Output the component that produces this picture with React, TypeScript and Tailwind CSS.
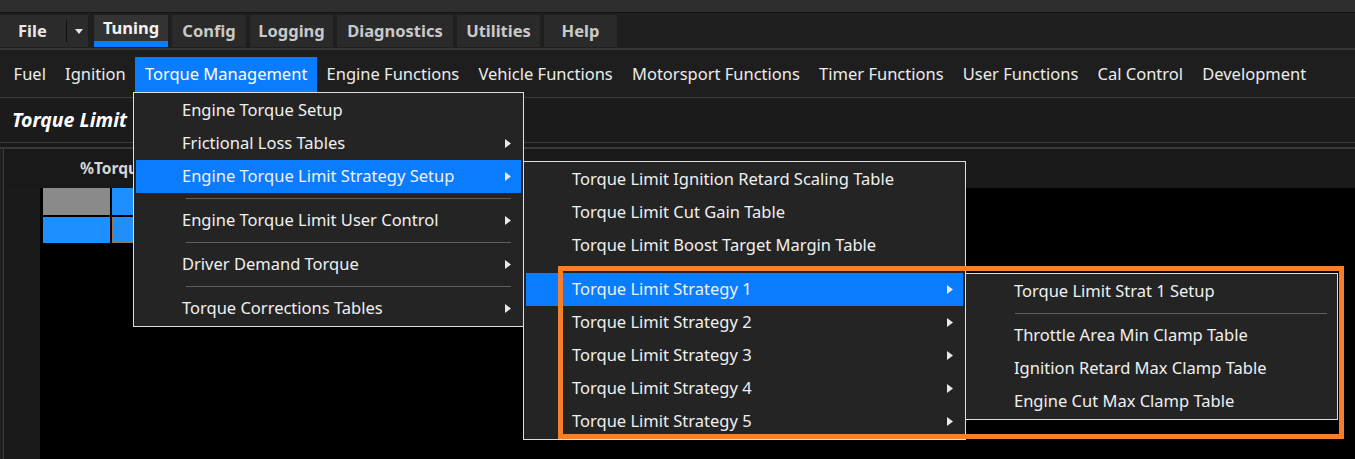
import React from 'react'

type Entry = { label?: string; sub?: boolean; active?: boolean; sep?: boolean }

const Arrow = () => (
  <svg width="6" height="9" viewBox="0 0 6 9" className="shrink-0">
    <path d="M0 0L6 4.5L0 9Z" fill="#e8e8e8" />
  </svg>
)

const Menu = ({ items, className, sepClass }: { items: Entry[]; className: string; sepClass: string }) => (
  <div className={`absolute bg-[#242424] border border-[#dedede] py-[1px] px-[2px] text-[16.5px] text-[#f0f0f0] ${className}`}>
    {items.map((it, i) =>
      it.sep ? (
        <div key={i} className={`h-[11px] flex items-center ${sepClass}`}>
          <div className="h-px w-full bg-[#5e5e5e]" />
        </div>
      ) : (
        <div key={i} className={`flex items-center h-[33px] pl-[46px] pr-[10px] ${it.active ? 'bg-[#0a7cff]' : ''}`}>
          <span className="flex-1 whitespace-nowrap">{it.label}</span>
          {it.sub && <Arrow />}
        </div>
      )
    )}
  </div>
)

export default function App() {
  const tabs = [
    { name: 'Tuning', w: 'w-[74px]', active: true },
    { name: 'Config', w: 'w-[74px]' },
    { name: 'Logging', w: 'w-[83px]' },
    { name: 'Diagnostics', w: 'w-[116px]' },
    { name: 'Utilities', w: 'w-[83px]' },
    { name: 'Help', w: 'w-[73px]' },
  ]
  const menuBar = ['Fuel', 'Ignition', 'Torque Management', 'Engine Functions', 'Vehicle Functions', 'Motorsport Functions', 'Timer Functions', 'User Functions', 'Cal Control', 'Development']

  const torqueMenu: Entry[] = [
    { label: 'Engine Torque Setup' },
    { label: 'Frictional Loss Tables', sub: true },
    { label: 'Engine Torque Limit Strategy Setup', sub: true, active: true },
    { sep: true },
    { label: 'Engine Torque Limit User Control', sub: true },
    { sep: true },
    { label: 'Driver Demand Torque', sub: true },
    { sep: true },
    { label: 'Torque Corrections Tables', sub: true },
  ]
  const strategyMenu: Entry[] = [
    { label: 'Torque Limit Ignition Retard Scaling Table' },
    { label: 'Torque Limit Cut Gain Table' },
    { label: 'Torque Limit Boost Target Margin Table' },
    { sep: true },
    { label: 'Torque Limit Strategy 1', sub: true, active: true },
    { label: 'Torque Limit Strategy 2', sub: true },
    { label: 'Torque Limit Strategy 3', sub: true },
    { label: 'Torque Limit Strategy 4', sub: true },
    { label: 'Torque Limit Strategy 5', sub: true },
  ]
  const strat1Menu: Entry[] = [
    { label: 'Torque Limit Strat 1 Setup' },
    { sep: true },
    { label: 'Throttle Area Min Clamp Table' },
    { label: 'Ignition Retard Max Clamp Table' },
    { label: 'Engine Cut Max Clamp Table' },
  ]

  return (
    <div className="relative w-[1355px] h-[459px] overflow-hidden flex flex-col bg-[#1e1e1e] font-['Noto_Sans',sans-serif]">
      {/* window top strip */}
      <div className="h-[13px] shrink-0 bg-[#2e2e2e] border-b border-[#141414]" />

      {/* ribbon tabs */}
      <div className="h-[37px] shrink-0 flex items-start pt-[2px] gap-[4px] bg-[#1f1f1f] border-b-2 border-[#363636] text-[16.5px] font-bold">
        <div className="w-[88px] h-[32px] mr-[2px] flex items-center bg-[#2b2b2b] text-[#e6e6e6]">
          <span className="ml-[18px] w-[48px]">File</span>
          <div className="w-px h-[22px] bg-[#111]" />
          <svg width="8" height="5" viewBox="0 0 8 5" className="ml-[8px]">
            <path d="M0 0H8L4 5Z" fill="#e6e6e6" />
          </svg>
        </div>
        {tabs.map((t) => (
          <div
            key={t.name}
            className={`relative h-[32px] flex items-center justify-center ${t.w} ${t.active ? 'bg-[#333333] text-[#f2f2f2]' : 'bg-[#2a2a2a] text-[#c9c9c9]'}`}
          >
            <span className={t.active ? '-mt-[6px]' : ''}>{t.name}</span>
            {t.active && <div className="absolute left-0 right-0 bottom-0 h-[6px] bg-[#0a7cff]" />}
          </div>
        ))}
      </div>

      {/* menu bar */}
      <div className="h-[48px] shrink-0 flex items-start pt-[7px] pl-[4px] border-b border-[#3a3a3a] text-[16.5px] text-[#ececec]">
        {menuBar.map((m) => (
          <div key={m} className={`h-[35px] px-[9.6px] flex items-center whitespace-nowrap ${m === 'Torque Management' ? 'bg-[#0a7cff] text-white' : ''}`}>
            {m}
          </div>
        ))}
      </div>

      {/* page title */}
      <div className="h-[44px] shrink-0 flex items-center pl-[12px] bg-[#1b1b1b] text-[19.5px] font-bold italic text-white">
        Torque Limit
      </div>
      <div className="h-[7px] shrink-0 bg-[#1a1a1a] border-t border-b-2 border-[#3a3a3a]" />

      {/* table panel */}
      <div className="flex-1 flex pl-[3px] bg-[#1f1f1f]">
        <div className="flex-1 flex flex-col border-l border-[#3c3c3c] bg-[#191919]">
          <div className="h-[39px] shrink-0 flex items-center pl-[76px] text-[15.5px] font-bold text-[#d6d6d6]">%Torque</div>
          <div className="flex-1 flex">
            <div className="w-[36px] bg-[#1a1a1a]" />
            <div className="flex-1 bg-black pl-[3px]">
              <div className="flex gap-[2px]">
                <div className="w-[67px] h-[27px] bg-[#8a8a8a]" />
                <div className="w-[67px] h-[27px] bg-[#1e8fff]" />
              </div>
              <div className="flex gap-[2px] mt-[2px]">
                <div className="w-[67px] h-[26px] bg-[#1e8fff]" />
                <div className="w-[67px] h-[26px] bg-[#1e8fff] border border-dotted border-[#9c7a55]" />
              </div>
            </div>
          </div>
        </div>
      </div>

      {/* open menus */}
      <Menu items={torqueMenu} className="left-[133px] top-[92px] w-[391px]" sepClass="pl-[50px] pr-[10px]" />
      <Menu items={strategyMenu} className="left-[523px] top-[161px] w-[443px]" sepClass="pl-[50px] pr-[10px]" />
      <Menu items={strat1Menu} className="left-[965px] top-[273px] w-[373px]" sepClass="pl-[47px] pr-[8px]" />

      {/* highlight annotation */}
      <div className="absolute left-[558px] top-[266px] w-[786px] h-[173px] border-[5px] border-[#f2802e]" />
    </div>
  )
}
